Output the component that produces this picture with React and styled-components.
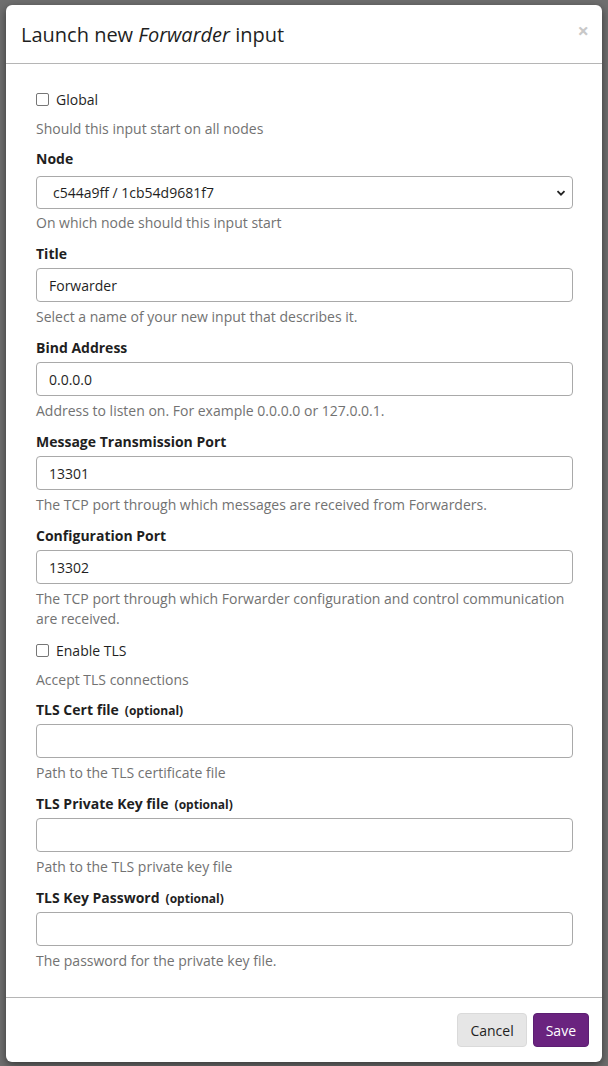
import React from 'react'
import styled, { createGlobalStyle } from 'styled-components'

const GlobalStyle = createGlobalStyle`
  html, body {
    margin: 0;
    padding: 0;
    background: #6f6f6f;
  }

  body {
    font-family: 'Open Sans', 'DejaVu Sans', sans-serif;
    color: #1f1f1f;
  }

  * {
    box-sizing: border-box;
  }
`

const Backdrop = styled.div`
  min-height: 1066px;
  padding: 5px 6px 5px 6px;
  background: #6f6f6f;
`

const Modal = styled.div`
  background: #fff;
  border-radius: 6px;
  box-shadow: 0 3px 9px rgba(0, 0, 0, 0.5);
  overflow: hidden;
`

const Header = styled.div`
  display: flex;
  align-items: center;
  justify-content: space-between;
  height: 59px;
  padding: 0 13px 0 15px;
  border-bottom: 1px solid #b5b5b5;
`

const Title = styled.h4`
  margin: 0;
  font-size: 20px;
  font-weight: 400;
  color: #1f1f1f;

  em {
    font-style: italic;
  }
`

const Close = styled.button`
  border: 0;
  background: none;
  padding: 0;
  margin-top: -6px;
  font-family: 'Open Sans', sans-serif;
  font-size: 20px;
  font-weight: 700;
  line-height: 1;
  color: #c8c8c8;
`

const Body = styled.div`
  padding: 25px 29px 26px 30px;
`

const FieldGroup = styled.div`
  margin-bottom: ${p => (p.check ? 10 : 11)}px;

  &:last-child {
    margin-bottom: 0;
  }
`

const CheckRow = styled.label`
  display: flex;
  align-items: center;
  height: 20px;
  font-size: 14px;
  color: #1f1f1f;
  margin-bottom: 10px;
`

const CheckBox = styled.span`
  display: inline-block;
  width: 13px;
  height: 13px;
  margin: 0 7px 0 0;
  border: 1px solid #767676;
  border-radius: 2px;
  background: #fff;
`

const Label = styled.div`
  font-size: 14px;
  font-weight: 700;
  line-height: 20px;
  height: 20px;
  color: #1f1f1f;
  margin-bottom: ${p => (p.select ? 7 : 4)}px;
`

const Optional = styled.span`
  font-size: 12px;
  line-height: 1;
  margin-left: 6px;
`

const TextInput = styled.div`
  height: 34px;
  border: 1px solid #a9a9a9;
  border-radius: 4px;
  padding: 0 12px;
  display: flex;
  align-items: center;
  font-size: 14px;
  color: #1f1f1f;
`

const SelectBox = styled(TextInput)`
  justify-content: space-between;
  padding: 0 6px 0 16px;
  height: 33px;
`

const Help = styled.div`
  font-size: 14px;
  line-height: 20px;
  color: #727272;
  margin-top: ${p => (p.tight ? 4 : 5)}px;
`

const CheckHelp = styled(Help)`
  margin-top: 0;
`

const Footer = styled.div`
  display: flex;
  justify-content: flex-end;
  gap: 6px;
  padding: 15px 13px 15px;
  border-top: 1px solid #b5b5b5;
`

const Button = styled.button`
  height: 34px;
  padding: 0 12px;
  border-radius: 4px;
  font-family: 'Open Sans', sans-serif;
  font-size: 14px;
  border: 1px solid ${p => (p.primary ? '#5c1f72' : '#dadada')};
  background: ${p => (p.primary ? '#6a237f' : '#e6e6e6')};
  color: ${p => (p.primary ? '#fff' : '#1f1f1f')};
`

const Chevron = () => (
  <svg width="10" height="10" viewBox="0 0 10 10" fill="none">
    <path d="M1.5 3.2 5 6.7 8.5 3.2" stroke="#222" strokeWidth="1.8" />
  </svg>
)

const Field = ({ label, optional, value, help }) => (
  <FieldGroup>
    <Label>
      {label}
      {optional && <Optional>(optional)</Optional>}
    </Label>
    <TextInput>{value}</TextInput>
    <Help>{help}</Help>
  </FieldGroup>
)

const Check = ({ label, help }) => (
  <FieldGroup check>
    <CheckRow>
      <CheckBox />
      {label}
    </CheckRow>
    <CheckHelp>{help}</CheckHelp>
  </FieldGroup>
)

const App = () => (
  <>
    <GlobalStyle />
    <Backdrop>
      <Modal>
        <Header>
          <Title>
            Launch new <em>Forwarder</em> input
          </Title>
          <Close>×</Close>
        </Header>
        <Body>
          <Check label="Global" help="Should this input start on all nodes" />
          <FieldGroup>
            <Label select>Node</Label>
            <SelectBox>
              c544a9ff / 1cb54d9681f7
              <Chevron />
            </SelectBox>
            <Help tight>On which node should this input start</Help>
          </FieldGroup>
          <Field
            label="Title"
            value="Forwarder"
            help="Select a name of your new input that describes it."
          />
          <Field
            label="Bind Address"
            value="0.0.0.0"
            help="Address to listen on. For example 0.0.0.0 or 127.0.0.1."
          />
          <Field
            label="Message Transmission Port"
            value="13301"
            help="The TCP port through which messages are received from Forwarders."
          />
          <Field
            label="Configuration Port"
            value="13302"
            help="The TCP port through which Forwarder configuration and control communication are received."
          />
          <Check label="Enable TLS" help="Accept TLS connections" />
          <Field label="TLS Cert file" optional help="Path to the TLS certificate file" />
          <Field
            label="TLS Private Key file"
            optional
            help="Path to the TLS private key file"
          />
          <Field
            label="TLS Key Password"
            optional
            help="The password for the private key file."
          />
        </Body>
        <Footer>
          <Button>Cancel</Button>
          <Button primary>Save</Button>
        </Footer>
      </Modal>
    </Backdrop>
  </>
)

export default App
